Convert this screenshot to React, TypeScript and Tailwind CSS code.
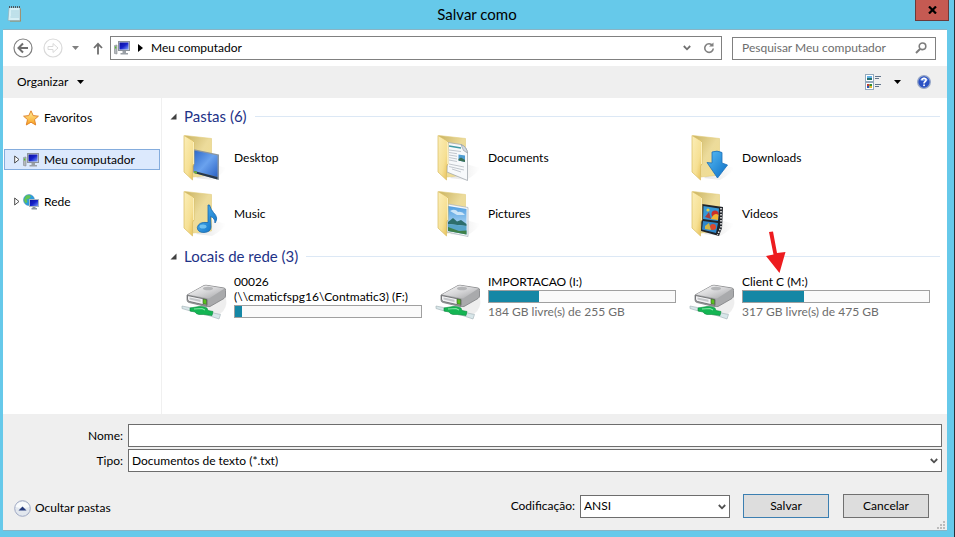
import React from 'react';
import clsx from 'clsx';

type FolderKind = 'desktop' | 'documents' | 'downloads' | 'music' | 'pictures' | 'videos';

interface Folder {
  name: string;
  kind: FolderKind;
}

interface Drive {
  lines: string[];
  used: number;
  free?: string;
  marked?: boolean;
}

const folders: Folder[] = [
  { name: 'Desktop', kind: 'desktop' },
  { name: 'Documents', kind: 'documents' },
  { name: 'Downloads', kind: 'downloads' },
  { name: 'Music', kind: 'music' },
  { name: 'Pictures', kind: 'pictures' },
  { name: 'Videos', kind: 'videos' },
];

const drives: Drive[] = [
  { lines: ['00026', '(\\\\cmaticfspg16\\Contmatic3) (F:)'], used: 4 },
  { lines: ['IMPORTACAO (I:)'], used: 27, free: '184 GB livre(s) de 255 GB' },
  { lines: ['Client C (M:)'], used: 33, free: '317 GB livre(s) de 475 GB', marked: true },
];

// Shared gradients, referenced by id from the icons
const Gradients = () => (
  <svg width="0" height="0" className="absolute" aria-hidden="true">
    <defs>
      <linearGradient id="front" x1="0" y1="0" x2="1" y2="1">
        <stop offset="0" stopColor="#fbeeb8" />
        <stop offset="0.6" stopColor="#f6e094" />
        <stop offset="1" stopColor="#e6bd50" />
      </linearGradient>
      <linearGradient id="back" x1="0" y1="0" x2="1" y2="1">
        <stop offset="0" stopColor="#c9b362" />
        <stop offset="0.5" stopColor="#ecdb9b" />
        <stop offset="1" stopColor="#f3df8f" />
      </linearGradient>
      <linearGradient id="screen" x1="0" y1="0" x2="1" y2="1">
        <stop offset="0" stopColor="#2d68c8" />
        <stop offset="0.5" stopColor="#6aa2ee" />
        <stop offset="1" stopColor="#2b62c4" />
      </linearGradient>
      <linearGradient id="blue" x1="0" y1="0" x2="1" y2="1">
        <stop offset="0" stopColor="#58bdf5" />
        <stop offset="1" stopColor="#0a6cc4" />
      </linearGradient>
      <linearGradient id="sky" x1="0" y1="0" x2="0" y2="1">
        <stop offset="0" stopColor="#4f9de0" />
        <stop offset="1" stopColor="#d3edfb" />
      </linearGradient>
      <linearGradient id="metal" x1="0" y1="0" x2="1" y2="1">
        <stop offset="0" stopColor="#fafafa" />
        <stop offset="0.5" stopColor="#d5d5d7" />
        <stop offset="1" stopColor="#a2a3a5" />
      </linearGradient>
      <linearGradient id="star" x1="0" y1="0" x2="0" y2="1">
        <stop offset="0" stopColor="#fff0a0" />
        <stop offset="1" stopColor="#f9a01c" />
      </linearGradient>
      <linearGradient id="pc" x1="0" y1="0" x2="1" y2="1">
        <stop offset="0" stopColor="#0a0f9c" />
        <stop offset="0.5" stopColor="#1722c9" />
        <stop offset="1" stopColor="#7fa4ff" />
      </linearGradient>
      <linearGradient id="shadow" x1="0" y1="0" x2="1" y2="0">
        <stop offset="0" stopColor="#bbbbbb" />
        <stop offset="1" stopColor="#ffffff" />
      </linearGradient>
    </defs>
  </svg>
);

const FolderContents = ({ kind }: { kind: FolderKind }) => {
  switch (kind) {
    case 'desktop':
      return (
        <g>
          <path d="M11 15L37 20.500V46L11 38.500Z" fill="#8c969f" />
          <path d="M12 16.500L35.500 21.500V43L12 37Z" fill="url(#screen)" />
          <path d="M12 37L35.500 43V45.500L12 39Z" fill="#26384c" />
          <path d="M12 37L15 37.800V39.800L12 39Z" fill="#6db33f" />
        </g>
      );
    case 'documents':
      return (
        <g>
          <path d="M12 8.500L25 10.500Q31 13 31.500 19V46.500L11 38Z" fill="#f7f9fb" stroke="#a3a9b0" strokeWidth="0.8" />
          <path d="M25 10.500Q31 13 31.500 19L27.500 16.500Z" fill="#d2dae2" stroke="#8e969e" strokeWidth="0.6" />
          <path d="M13 12L25 14" stroke="#3f9aa5" strokeWidth="1.400" />
          <path d="M13 16L25 17.500M13 18.500L21 19.700M13 21L21 22.300M13 23.500L21 25M13 26L21 27.500M13 30L28 33M13 32.500L28 36M16 35L25 38" stroke="#b4bac1" strokeWidth="0.800" />
          <path d="M22.500 20.500L29 21.500V28L22.500 26.500Z" fill="#4f9dd2" />
          <path d="M22.500 25L25 23.500L29 26V28L22.500 26.500Z" fill="#3c7053" />
        </g>
      );
    case 'downloads':
      return (
        <path d="M22 18Q27 16 32 18.500V29L37.500 31L27.500 44L17 28.500L22 29Z" fill="url(#blue)" stroke="#1c6fb8" strokeWidth="0.8" />
      );
    case 'music':
      return (
        <g fill="url(#blue)" stroke="#1b69ad" strokeWidth="0.8">
          <path d="M26 15H27.500Q29 20 31.500 22.500Q37 28 33 33Q33 28 28.500 26.500L29 37Q29 42 22 42.500Q15.500 42.500 15.300 37.500Q16.500 31.500 26 32.500Z" />
          <ellipse cx="21" cy="36.500" rx="3.500" ry="2" fill="#8cd4fa" stroke="none" opacity="0.7" />
        </g>
      );
    case 'pictures':
      return (
        <g>
          <path d="M12 14L32 17.500V46.500L11 42Z" fill="#f4f7fa" stroke="#a9b3bc" strokeWidth="0.7" />
          <path d="M12 16L30.500 19V44.500L12 41Z" fill="url(#sky)" />
          <path d="M14 21Q19 18 22 22Q26 21 29 25L21 25Z" fill="#e4f3fd" opacity="0.8" />
          <path d="M12 32L17 28L21 31.500L25 30L30.500 34V36L12 34Z" fill="#2d6e6c" />
          <path d="M12 34L30.500 36V44.500L12 41Z" fill="#58a5c9" />
          <path d="M12 37L23 41L30.500 40.500V44.500L12 41Z" fill="#3f8049" />
        </g>
      );
    case 'videos':
      return (
        <g>
          <path d="M12 14L33 17L32 38L29 46L11 41Z" fill="#20242a" />
          <path d="M13.500 16L29 18.500L28 31L13 29Z" fill="#3798d6" />
          <path d="M13 31L28 33L26 43L12 39.500Z" fill="#2f87c9" />
          <circle cx="25" cy="24" r="3.500" fill="#ca3029" />
          <path d="M22 27Q25 22 28.500 25L28 30L21 29Z" fill="#efb735" />
          <circle cx="18" cy="20" r="1.600" fill="#e3d14a" />
          <path d="M15 27L19 22L21 29Z" fill="#a93c3a" />
          <circle cx="23" cy="37" r="3" fill="#dc4a2e" />
          <path d="M15 36L19 33L21 40L15 39Z" fill="#d5b846" />
          <path d="M31 18V37L27.500 45" fill="none" stroke="#f5f5f5" strokeWidth="1.500" strokeDasharray="1.500 1.500" />
        </g>
      );
  }
};

const FolderIcon = ({ kind }: { kind: FolderKind }) => (
  <svg width="48" height="48" viewBox="-2 0 48 48" className="shrink-0" aria-hidden="true">
    <path d="M30 30L44 34Q41 40 30 46L14 44Z" fill="url(#shadow)" opacity="0.4" />
    <path d="M3 1.500L29.500 4.500V41L11 43Z" fill="url(#back)" stroke="#e2cc7c" strokeWidth="0.6" />
    <FolderContents kind={kind} />
    <path d="M2 1.500L10.500 6.500Q12 7.500 12 9V30L10.500 32V46L2 38Z" fill="url(#front)" stroke="#d9bc60" strokeWidth="0.7" />
    <path d="M11.500 8V30" stroke="#fff6cd" strokeWidth="0.800" />
  </svg>
);

const DriveIcon = () => (
  <svg width="48" height="48" viewBox="0 0 48 48" className="shrink-0" aria-hidden="true">
    <path d="M30 32L46 24Q48 34 40 40L24 42Z" fill="#dddddd" opacity="0.5" />
    {/* disk box */}
    <path d="M7 21L24 11.500Q26 11 28 11.500L44 14Q46 14.500 45.500 16.500V22Q45.500 23.500 44 24.500L30 32.500Q28 33 26 32.500L9 28.500Q7 28 7 26Z" fill="#a9aaac" stroke="#7c7d80" strokeWidth="0.8" />
    <path d="M8 20.500L24 11.800Q26 11.300 28 11.800L44.500 14.500L29 24.500Z" fill="url(#metal)" />
    <ellipse cx="28" cy="14.500" rx="5" ry="1.800" fill="#b4b5b7" />
    <path d="M7.500 21.500L27 25.500V31.500L9.500 27.500Q7.500 27 7.500 25Z" fill="#f2f2f4" stroke="#5f6163" strokeWidth="0.8" />
    <path d="M9.500 23.500L20.500 25.800V28L9.500 25.600Z" fill="#c4c6c9" />
    <path d="M23 25L26.500 25.800V30.500L23 29.700Z" fill="#58c01e" stroke="#35502a" strokeWidth="0.6" />
    {/* cable */}
    <path d="M2 32L12 34V37.500L2 34.500Z" fill="#d8e6e9" stroke="#a0afb3" strokeWidth="0.6" />
    <path d="M24 37L40.500 40.500L39 45L24 40Z" fill="#d8e6e9" stroke="#a0afb3" strokeWidth="0.6" />
    <path d="M10 34L19 32.500Q24 32 27 34L28 36.500L33 37.500L32 41.500L24 40.500L19 40.500Q16 40 15 38L10 37Z" fill="#14b553" stroke="#078a3b" strokeWidth="0.6" />
    <path d="M14 35L22 34.500L25 36" fill="none" stroke="#84e8a5" strokeWidth="1.200" />
  </svg>
);

const ComputerIcon = () => (
  <svg width="16" height="16" viewBox="0 0 16 16" className="shrink-0" aria-hidden="true">
    <path d="M0.500 5.500L3 5V14L0.500 13.500Z" fill="#b4b8bc" stroke="#84898e" strokeWidth="0.6" />
    <rect x="1" y="6.500" width="1.300" height="2" fill="#51c228" />
    <rect x="4.500" y="1.500" width="11" height="9" fill="#d3d7db" stroke="#8d949b" />
    <rect x="5.500" y="2.500" width="9" height="7" fill="url(#pc)" />
    <path d="M8.500 11H12V13H14V14.500H6.500V13H8.500Z" fill="#9aa0a6" />
  </svg>
);

const NetworkIcon = () => (
  <svg width="16" height="16" viewBox="0 0 16 16" className="shrink-0" aria-hidden="true">
    <circle cx="6" cy="6" r="5.500" fill="#2b9ce0" stroke="#4387ae" strokeWidth="0.5" />
    <path d="M3 1.500Q7 0 8 2.500L6 5L3.500 5.500L4.500 8L2.500 9.500L0.800 6Z" fill="#62c455" />
    <rect x="6.500" y="5.500" width="9" height="7" fill="url(#pc)" stroke="#a9b6c2" />
    <path d="M9.500 13H12.500V14H14V15.500H8.500V14H9.500Z" fill="#8a949e" />
  </svg>
);

const StarIcon = () => (
  <svg width="16" height="16" viewBox="0 0 16 16" className="shrink-0" aria-hidden="true">
    <path d="M8 0.800L10.200 5.600L15.400 6.200L11.500 9.600L12.700 15L8 12.200L3.300 15L4.500 9.600L0.600 6.200L5.800 5.600Z" fill="url(#star)" stroke="#e2872f" strokeLinejoin="round" />
  </svg>
);

const NotepadIcon = () => (
  <svg width="16" height="18" viewBox="0 0 16 18" aria-hidden="true">
    <path d="M3 3.500H14V16.500H3Z" fill="#a8834f" />
    <path d="M2 2.500H13V15.500H1Z" fill="#d6eff5" stroke="#8fb0ba" strokeWidth="0.7" />
    <path d="M4 6H12M4 8H12M4 10H12M3.500 12H12" stroke="#9ccbd9" strokeWidth="0.8" />
    <path d="M2 2H14" stroke="#4b565d" strokeWidth="2" strokeDasharray="1 1" />
  </svg>
);

const Chevron = ({ className }: { className?: string }) => (
  <svg width="8" height="6" viewBox="0 0 8 6" className={className} aria-hidden="true">
    <path d="M0.800 1L4 4.300L7.200 1" fill="none" stroke="currentColor" strokeWidth="1.800" />
  </svg>
);

const Caret = ({ className }: { className?: string }) => (
  <svg width="7" height="4" viewBox="0 0 7 4" className={className} aria-hidden="true">
    <path d="M0 0H7L3.500 4Z" fill="currentColor" />
  </svg>
);

const NavCircle = ({ label, forward }: { label: string; forward?: boolean }) => (
  <button aria-label={label} disabled={forward}>
    <svg width="20" height="20" viewBox="0 0 20 20">
      <circle cx="10" cy="10" r="9" fill="#fff" stroke={forward ? '#d9d9d9' : '#808080'} strokeWidth="1.200" />
      {forward ? (
        <path d="M5 8.500H10V5.500L15 10L10 14.500V11.500H5Z" fill="none" stroke="#dadada" />
      ) : (
        <path d="M15 10H6M10 5.500L5.500 10L10 14.500" fill="none" stroke="#6e6e6e" strokeWidth="2" />
      )}
    </svg>
  </button>
);

const Expander = () => (
  <svg width="6" height="9" viewBox="0 0 6 9" aria-hidden="true">
    <path d="M0.700 1L5 4.500L0.700 8Z" fill="#fff" stroke="#3c3c3c" strokeWidth="0.900" />
  </svg>
);

interface TreeItemProps {
  label: string;
  icon: React.ReactNode;
  expandable?: boolean;
  selected?: boolean;
}

const TreeItem = ({ label, icon, expandable, selected }: TreeItemProps) => (
  <button
    className={clsx(
      'flex h-[21px] w-full items-center border pl-[9px] text-left',
      selected ? 'border-[#84acdd] bg-[#dce9fd]' : 'border-transparent'
    )}
  >
    <span className="w-[9px]">{expandable && <Expander />}</span>
    {icon}
    <span className="ml-[5px]">{label}</span>
  </button>
);

const GroupHeading = ({ title }: { title: string }) => (
  <div className="flex h-7 items-center pr-[7px] pl-2">
    <svg width="7" height="7" viewBox="0 0 7 7" aria-hidden="true">
      <path d="M6.500 0.500V6.500H0.500Z" fill="#404040" />
    </svg>
    <h2 className="ml-[7px] text-[15px] leading-5 text-[#1e3287]">{title}</h2>
    <div className="ml-2 h-px flex-1 bg-[#dce8f5]" />
  </div>
);

const DriveItem = ({ drive }: { drive: Drive }) => (
  <div className="relative flex h-[60px] gap-[6px] pt-1">
    <DriveIcon />
    <div className="w-[188px] leading-[15px]">
      {drive.lines.map((line) => (
        <div key={line} className="whitespace-nowrap">{line}</div>
      ))}
      <div className="mt-px h-[13px] border border-[#a0a0a0] bg-[#fafafa]">
        <div className="h-full bg-[#1587a5]" style={{ width: `${drive.used}%` }} />
      </div>
      {drive.free && <div className="mt-px whitespace-nowrap text-[#6d6d6d]">{drive.free}</div>}
    </div>
    {drive.marked && (
      <svg width="20" height="42" viewBox="0 0 20 42" className="absolute -top-[39px] left-[78px]" aria-hidden="true">
        <path d="M3 1L7 0.500L11 22L19.500 21L13.500 42L0 25L7.500 23.500Z" fill="#ed1c1f" />
      </svg>
    )}
  </div>
);

export default function App() {
  return (
    <div className="flex min-h-screen flex-col border-r border-[#2a3038] bg-[#66c9ea] pr-[7px] pb-[6px] pl-[3px] font-[Lato,'Open_Sans',sans-serif] text-[12px] text-black">
      <Gradients />

      {/* Title bar */}
      <header className="flex h-[29px] items-start">
        <div className="flex flex-1 pt-[5px] pl-1">
          <NotepadIcon />
        </div>
        <h1 className="text-[15px] leading-[29px]">Salvar como</h1>
        <div className="flex flex-1 justify-end">
          <button aria-label="Fechar" className="-mr-[2px] flex h-[21px] w-[34px] items-center justify-center border border-t-0 border-[#6b3a3a] bg-[#c55a52]">
            <svg width="9" height="8" viewBox="0 0 9 8">
              <path d="M1 0.500L8 7.500M8 0.500L1 7.500" stroke="#000" strokeWidth="2.200" />
            </svg>
          </button>
        </div>
      </header>

      <div className="flex flex-1 flex-col border-t border-b border-[#8ab4c4] bg-white">
        {/* Address bar */}
        <nav className="flex h-9 items-center pr-[11px] pl-[10px]">
          <NavCircle label="Voltar" />
          <span className="ml-[10px] flex"><NavCircle label="Avançar" forward /></span>
          <button aria-label="Locais recentes" className="ml-[9px]"><Caret className="text-[#808080]" /></button>
          <button aria-label="Acima" className="ml-[13px]">
            <svg width="12" height="13" viewBox="0 0 12 13">
              <path d="M6 12.500V2M2 6L6 1.800L10 6" fill="none" stroke="#6f6f6f" strokeWidth="1.800" />
            </svg>
          </button>
          <div className="ml-[6px] flex h-6 flex-1 items-center border border-[#808080] pr-[6px] pl-[3px]">
            <ComputerIcon />
            <svg width="5" height="8" viewBox="0 0 5 8" className="ml-2" aria-hidden="true">
              <path d="M0 0L5 4L0 8Z" fill="#000" />
            </svg>
            <span className="ml-2 flex-1">Meu computador</span>
            <button aria-label="Locais anteriores"><Chevron className="text-[#707070]" /></button>
            <button aria-label="Atualizar" className="ml-3">
              <svg width="12" height="12" viewBox="0 0 12 12">
                <path d="M9.500 3.500A4.300 4.300 0 1 0 10.300 6.500" fill="none" stroke="#808080" strokeWidth="1.600" />
                <path d="M6 4.500H10.500V0.500Z" fill="#808080" />
              </svg>
            </button>
          </div>
          <label className="ml-[10px] flex h-[23px] w-[204px] items-center border border-[#808080] pr-2 pl-[9px]">
            <input
              type="search"
              aria-label="Pesquisar"
              placeholder="Pesquisar Meu computador"
              className="min-w-0 flex-1 outline-none placeholder:text-[#6d6d6d]"
            />
            <svg width="12" height="12" viewBox="0 0 12 12" aria-hidden="true">
              <circle cx="7.500" cy="4.300" r="3.300" fill="none" stroke="#7c7c7c" strokeWidth="1.600" />
              <path d="M5 7L1 11" stroke="#7c7c7c" strokeWidth="2" />
            </svg>
          </label>
        </nav>

        {/* Command bar */}
        <div className="flex h-8 items-center bg-[#efefef] pr-4 pl-[14px]">
          <button className="flex items-center gap-[9px]">
            Organizar <Caret />
          </button>
          <button aria-label="Modo de exibição" className="ml-auto">
            <svg width="16" height="16" viewBox="0 0 16 16">
              <rect x="0.500" y="0.500" width="8" height="7" fill="#fff" stroke="#94a9bd" />
              <path d="M2 3H7V6H2Z" fill="#25706d" />
              <path d="M2 2H7V4H2Z" fill="#62b1e6" />
              <rect x="0.500" y="8.500" width="8" height="7" fill="#fff" stroke="#94a9bd" />
              <path d="M2 10H4.500V12H2Z" fill="#c83d30" />
              <path d="M4.500 10H7V12H4.500Z" fill="#308d34" />
              <path d="M2 12H4.500V14H2Z" fill="#2c56b4" />
              <path d="M4.500 12H7V14H4.500Z" fill="#e7b928" />
              <path d="M10 2.500H16M10 4.500H14M10 10.500H16M10 12.500H14" stroke="#60748b" />
            </svg>
          </button>
          <button aria-label="Mais opções" className="ml-[13px]"><Caret /></button>
          <button aria-label="Ajuda" className="ml-4 flex">
            <svg width="14" height="14" viewBox="0 0 14 14" aria-hidden="true">
              <circle cx="7" cy="7" r="6.300" fill="#2b52c4" stroke="#97a7c6" strokeWidth="1.300" />
              <path d="M2.500 5Q7 0 11.500 5Q7 7 2.500 5Z" fill="#6b91e6" />
              <path d="M4.900 5.300Q5 3.300 7 3.300Q9.200 3.400 9.100 5.200Q9 6.200 7.700 7Q7 7.500 7 8.500" fill="none" stroke="#fff" strokeWidth="1.600" />
              <rect x="6.200" y="9.500" width="1.700" height="1.600" fill="#fff" />
            </svg>
          </button>
        </div>

        <div className="flex flex-1">
          {/* Navigation pane */}
          <aside className="flex w-[159px] flex-col gap-[21px] border-r border-[#f0f0f0] pt-[9px] pr-px pl-px">
            <TreeItem label="Favoritos" icon={<StarIcon />} />
            <TreeItem label="Meu computador" icon={<ComputerIcon />} expandable selected />
            <TreeItem label="Rede" icon={<NetworkIcon />} expandable />
          </aside>

          <main className="flex-1 pt-1">
            <GroupHeading title="Pastas (6)" />
            <div className="grid grid-cols-[repeat(auto-fill,254px)] pl-[18px]">
              {folders.map((folder) => (
                <div key={folder.name} className="flex h-14 items-center gap-[6px]">
                  <FolderIcon kind={folder.kind} />
                  <span>{folder.name}</span>
                </div>
              ))}
            </div>
            <GroupHeading title="Locais de rede (3)" />
            <div className="grid grid-cols-[repeat(auto-fill,254px)] pl-[18px]">
              {drives.map((drive) => (
                <DriveItem key={drive.lines[0]} drive={drive} />
              ))}
            </div>
          </main>
        </div>

        {/* File name, type and actions */}
        <footer className="relative bg-[#efefef] pt-[10px] pb-3">
          <div className="grid grid-cols-[120px_1fr] items-center gap-x-[5px] gap-y-[2px] pr-[5px]">
            <label htmlFor="name" className="text-right">Nome:</label>
            <input id="name" type="text" className="h-[23px] border border-[#6d6d6d] bg-white px-1 outline-none" />
            <label htmlFor="type" className="text-right">Tipo:</label>
            <div className="relative flex">
              <select id="type" className="h-[23px] w-full appearance-none border border-[#6d6d6d] bg-white pl-[3px] outline-none">
                <option>Documentos de texto (*.txt)</option>
              </select>
              <Chevron className="pointer-events-none absolute top-[9px] right-1 text-[#505050]" />
            </div>
          </div>
          <div className="mt-[22px] flex items-center pr-[18px] pl-[11px]">
            <button className="flex items-center gap-1 pt-1">
              <svg width="17" height="17" viewBox="0 0 17 17" aria-hidden="true">
                <circle cx="8.500" cy="8.500" r="7.800" fill="#e2e7ee" stroke="#9fa9c4" />
                <path d="M1.500 7Q3 2 8.500 1.800Q14 2 15.500 7Q8.500 9 1.500 7Z" fill="#f8fafc" />
                <path d="M4.500 10.500L8.500 6.500L12.500 10.500Z" fill="#253a7c" />
              </svg>
              Ocultar pastas
            </button>
            <label htmlFor="encoding" className="ml-auto">Codificação:</label>
            <div className="relative ml-[5px] flex">
              <select id="encoding" className="h-[23px] w-[150px] appearance-none border border-[#6d6d6d] bg-white pl-[3px] outline-none">
                <option>ANSI</option>
              </select>
              <Chevron className="pointer-events-none absolute top-[9px] right-1 text-[#505050]" />
            </div>
            <button className="ml-[13px] h-6 w-[86px] border border-[#3c7fb1] bg-[#dddddd]">Salvar</button>
            <button className="ml-[14px] h-6 w-[86px] border border-[#707070] bg-[#dddddd]">Cancelar</button>
          </div>
          <svg width="8" height="8" viewBox="0 0 8 8" className="absolute right-[2px] bottom-[1px]" aria-hidden="true">
            <path d="M6 0H8V2H6ZM3 3H5V5H3ZM6 3H8V5H6ZM0 6H2V8H0ZM3 6H5V8H3ZM6 6H8V8H6Z" fill="#bcbcbc" />
          </svg>
        </footer>
      </div>
    </div>
  );
}
